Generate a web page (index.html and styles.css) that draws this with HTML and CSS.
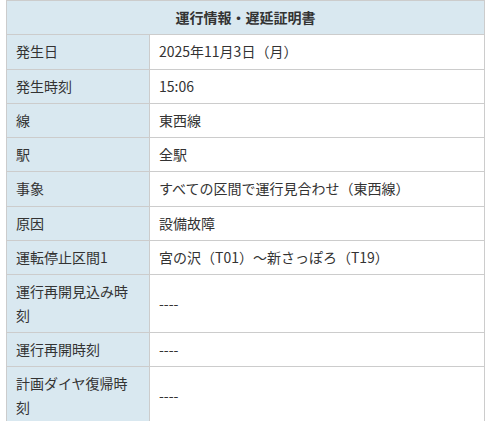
FILE: index.html
```html
<!DOCTYPE html>
<html lang="ja">
<head>
<meta charset="utf-8">
<link rel="stylesheet" href="styles.css">
</head>
<body>
<table class="cert">
  <colgroup><col class="c-label"><col class="c-value"></colgroup>
  <thead>
    <tr><th colspan="2" class="title">運行情報・遅延証明書</th></tr>
  </thead>
  <tbody>
    <tr><th>発生日</th><td>2025年11月3日（月）</td></tr>
    <tr><th>発生時刻</th><td>15:06</td></tr>
    <tr><th>線</th><td>東西線</td></tr>
    <tr><th>駅</th><td>全駅</td></tr>
    <tr><th>事象</th><td>すべての区間で運行見合わせ（東西線）</td></tr>
    <tr><th>原因</th><td>設備故障</td></tr>
    <tr><th>運転停止区間1</th><td>宮の沢（T01）～新さっぽろ（T19）</td></tr>
    <tr><th>運行再開見込み時刻</th><td>----</td></tr>
    <tr><th>運行再開時刻</th><td>----</td></tr>
    <tr><th>計画ダイヤ復帰時刻</th><td>----</td></tr>
  </tbody>
</table>
</body>
</html>
```

FILE: styles.css
```css
html, body {
  margin: 0;
  padding: 0;
  background: #fff;
}
body {
  font-family: "Noto Sans CJK JP", "Noto Sans", sans-serif;
  font-size: 14px;
  color: #333;
}
.cert {
  border-collapse: collapse;
  table-layout: fixed;
  width: 479px;
  margin-left: 6px;
}
.c-label { width: 143px; }
.cert th, .cert td {
  border: 1px solid #ccc;
  padding: 5px 9px;
  line-height: 23.3px;
  text-align: left;
  vertical-align: middle;
  font-weight: normal;
}
.cert tbody th {
  background: #d9e8f0;
}
.cert td {
  background: #fff;
}
.cert .title {
  background: #d9e8f0;
  text-align: center;
  font-weight: bold;
}
```
